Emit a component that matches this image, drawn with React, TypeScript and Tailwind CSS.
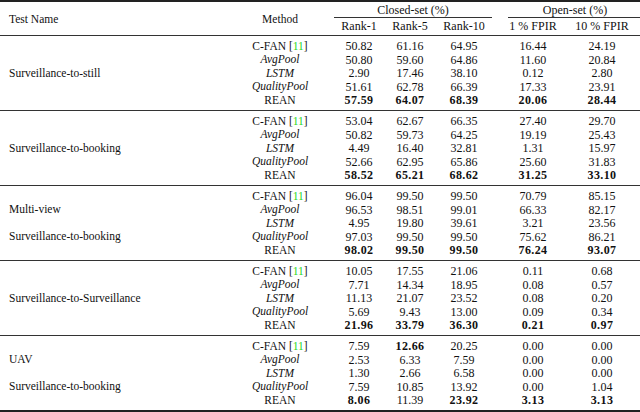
const groups: { names: string[]; rows: string[][] }[] = [
  {
    names: ["", "", "Surveillance-to-still", "", ""],
    rows: [
      ["50.82", "61.16", "64.95", "16.44", "24.19"],
      ["50.80", "59.60", "64.86", "11.60", "20.84"],
      ["2.90", "17.46", "38.10", "0.12", "2.80"],
      ["51.61", "62.78", "66.39", "17.33", "23.91"],
      ["*57.59", "*64.07", "*68.39", "*20.06", "*28.44"],
    ],
  },
  {
    names: ["", "", "Surveillance-to-booking", "", ""],
    rows: [
      ["53.04", "62.67", "66.35", "27.40", "29.70"],
      ["50.82", "59.73", "64.25", "19.19", "25.43"],
      ["4.49", "16.40", "32.81", "1.31", "15.97"],
      ["52.66", "62.95", "65.86", "25.60", "31.83"],
      ["*58.52", "*65.21", "*68.62", "*31.25", "*33.10"],
    ],
  },
  {
    names: ["", "Multi-view", "", "Surveillance-to-booking", ""],
    rows: [
      ["96.04", "99.50", "99.50", "70.79", "85.15"],
      ["96.53", "98.51", "99.01", "66.33", "82.17"],
      ["4.95", "19.80", "39.61", "3.21", "23.56"],
      ["97.03", "99.50", "99.50", "75.62", "86.21"],
      ["*98.02", "*99.50", "*99.50", "*76.24", "*93.07"],
    ],
  },
  {
    names: ["", "", "Surveillance-to-Surveillance", "", ""],
    rows: [
      ["10.05", "17.55", "21.06", "0.11", "0.68"],
      ["7.71", "14.34", "18.95", "0.08", "0.57"],
      ["11.13", "21.07", "23.52", "0.08", "0.20"],
      ["5.69", "9.43", "13.00", "0.09", "0.34"],
      ["*21.96", "*33.79", "*36.30", "*0.21", "*0.97"],
    ],
  },
  {
    names: ["", "UAV", "", "Surveillance-to-booking", ""],
    rows: [
      ["7.59", "*12.66", "20.25", "0.00", "0.00"],
      ["2.53", "6.33", "7.59", "0.00", "0.00"],
      ["1.30", "2.66", "6.58", "0.00", "0.00"],
      ["7.59", "10.85", "13.92", "0.00", "1.04"],
      ["*8.06", "11.39", "*23.92", "*3.13", "*3.13"],
    ],
  },
];

function Method({ i }: { i: number }) {
  if (i === 0)
    return (
      <span>
        C-FAN [<span className="text-[#1fd81f]">11</span>]
      </span>
    );
  if (i === 1) return <span className="italic">AvgPool</span>;
  if (i === 2) return <span className="italic">LSTM</span>;
  if (i === 3) return <span className="italic">QualityPool</span>;
  return <span>REAN</span>;
}

function Num({ v }: { v: string }) {
  const bold = v.startsWith("*");
  return <span className={bold ? "font-bold tracking-[0.4px]" : ""}>{bold ? v.slice(1) : v}</span>;
}

function Cols({ vals }: { vals: string[] }) {
  return (
    <>
      <div className="ml-[14px] w-[50px] text-center text-[12px]"><Num v={vals[0]} /></div>
      <div className="w-[52px] text-center text-[12px]"><Num v={vals[1]} /></div>
      <div className="w-[56px] text-center text-[12px]"><Num v={vals[2]} /></div>
      <div className="ml-[13px] w-[56px] text-center text-[12px]"><Num v={vals[3]} /></div>
      <div className="ml-[7px] w-[68px] text-center text-[12px]"><Num v={vals[4]} /></div>
    </>
  );
}

export default function App() {
  return (
    <div className="h-[412px] w-[640px] bg-white text-[#111] font-['Liberation_Serif',serif] text-[11.5px] leading-none">
      <div className="h-[2px] bg-[#222]" />
      <div className="flex h-[33px]">
        <div className="flex w-[240px] items-center pl-[9px] pt-[2px]">Test Name</div>
        <div className="flex w-[80px] items-center justify-center pt-[2px]">Method</div>
        <div className="flex flex-col">
          <div className="flex h-[16px]">
            <div className="ml-[14px] flex w-[158px] items-center justify-center border-b border-[#333] text-[12px]">Closed-set (%)</div>
            <div className="ml-[16px] flex w-[132px] items-center justify-center border-b border-[#333] pl-[2px] text-[12px]">Open-set (%)</div>
          </div>
          <div className="flex h-[16px] items-center">
            <Cols vals={["Rank-1", "Rank-5", "Rank-10", "1 % FPIR", "10 % FPIR"]} />
          </div>
        </div>
      </div>
      {groups.map((g, gi) => (
        <div key={gi} className="border-t border-[#333] pt-[3.5px] pb-[3px]">
          {g.rows.map((r, ri) => (
            <div key={ri} className="flex h-[13.5px] items-center">
              <div className="w-[240px] pl-[9px]">{g.names[ri]}</div>
              <div className="w-[80px] text-center"><Method i={ri} /></div>
              <Cols vals={r} />
            </div>
          ))}
        </div>
      ))}
      <div className="h-[2px] bg-[#222]" />
    </div>
  );
}
